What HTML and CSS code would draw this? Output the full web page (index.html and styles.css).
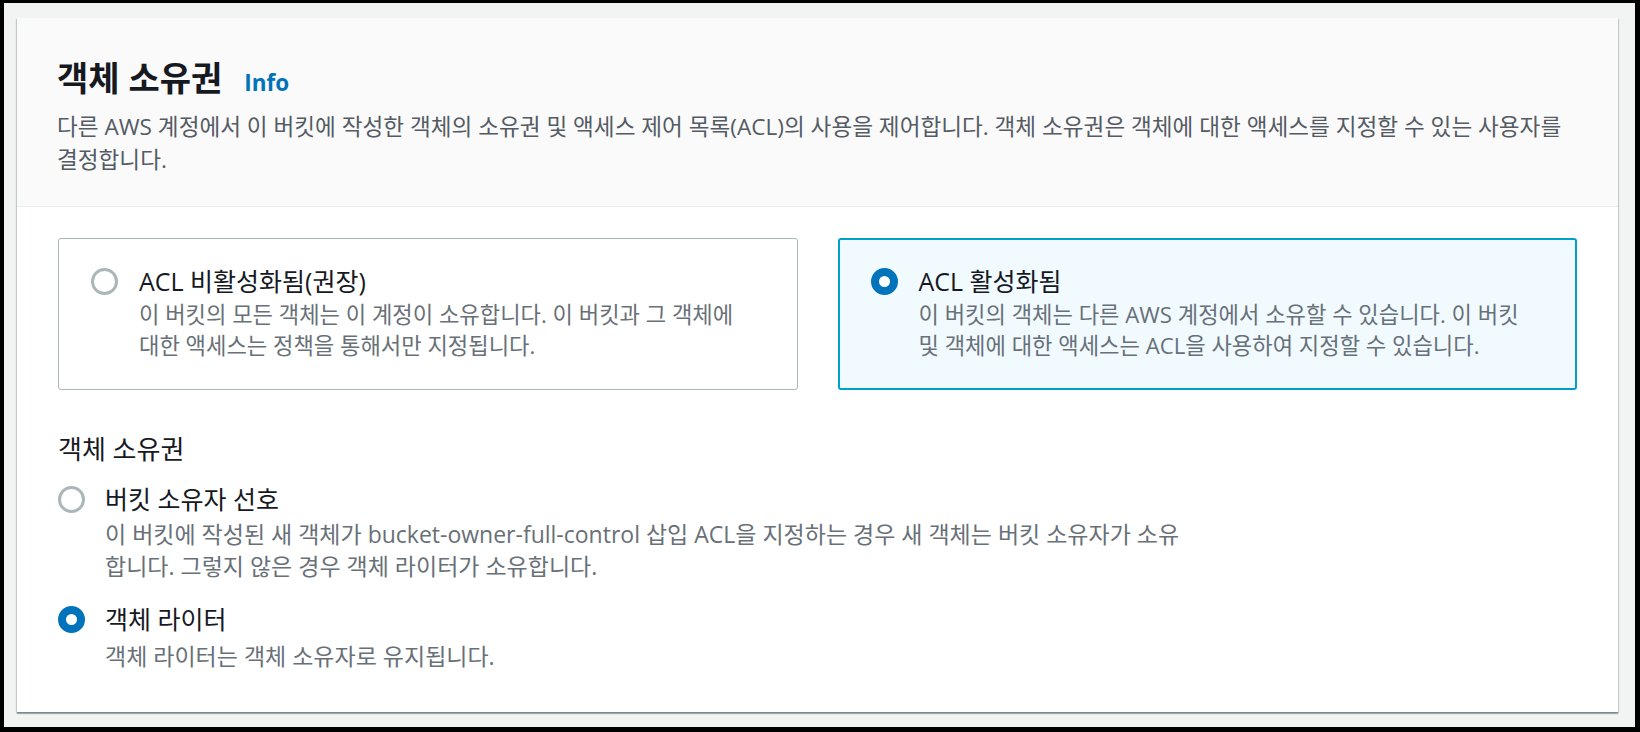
FILE: index.html
```html
<!DOCTYPE html>
<html lang="ko">

<head>
    <meta charset="UTF-8">
    <meta name="viewport" content="width=device-width, initial-scale=1.0">
    <title>객체 소유권</title>
    <link rel="stylesheet" href="styles.css">
</head>

<body>
    <div class="frame">
        <section class="container">
            <header class="container-header">
                <h2 class="title">객체 소유권<a class="info" href="#">Info</a></h2>
                <p class="desc">다른 AWS 계정에서 이 버킷에 작성한 객체의 소유권 및 액세스 제어 목록(ACL)의 사용을 제어합니다. 객체 소유권은 객체에 대한 액세스를 지정할 수 있는 사용자를 결정합니다.</p>
            </header>

            <div class="container-body">
                <!-- ACL tiles -->
                <div class="tiles">
                    <div class="tile">
                        <span class="radio"></span>
                        <div class="tile-text">
                            <div class="tile-title">ACL 비활성화됨(권장)</div>
                            <div class="tile-desc">이 버킷의 모든 객체는 이 계정이 소유합니다. 이 버킷과 그 객체에 대한 액세스는 정책을 통해서만 지정됩니다.</div>
                        </div>
                    </div>
                    <div class="tile selected">
                        <span class="radio checked"></span>
                        <div class="tile-text">
                            <div class="tile-title">ACL 활성화됨</div>
                            <div class="tile-desc">이 버킷의 객체는 다른 AWS 계정에서 소유할 수 있습니다. 이 버킷 및 객체에 대한 액세스는 ACL을 사용하여 지정할 수 있습니다.</div>
                        </div>
                    </div>
                </div>

                <div class="field-label">객체 소유권</div>

                <div class="radio-group">
                    <div class="radio-item">
                        <span class="radio"></span>
                        <div class="radio-text">
                            <div class="radio-title">버킷 소유자 선호</div>
                            <div class="radio-desc">이 버킷에 작성된 새 객체가 bucket-owner-full-control 삽입 ACL을 지정하는 경우 새 객체는 버킷 소유자가 소유합니다. 그렇지 않은 경우 객체 라이터가 소유합니다.</div>
                        </div>
                    </div>
                    <div class="radio-item">
                        <span class="radio checked"></span>
                        <div class="radio-text">
                            <div class="radio-title">객체 라이터</div>
                            <div class="radio-desc">객체 라이터는 객체 소유자로 유지됩니다.</div>
                        </div>
                    </div>
                </div>
            </div>
        </section>
    </div>
</body>

</html>
```

FILE: styles.css
```css
body {
    margin: 0;
    font-family: "Open Sans", "Noto Sans CJK KR", sans-serif;
    color: #16191f;
}

.frame {
    box-sizing: border-box;
    width: 1640px;
    height: 732px;
    border-style: solid;
    border-color: #000;
    border-width: 3px 5px 5px 4px;
    background-color: #f2f3f3;
    padding: 15px 17px 0 13px;
}

.container {
    background-color: #fff;
    box-shadow: 0 2px 1px 0 rgba(0, 28, 36, 0.3), 1px 1px 1px 0 rgba(0, 28, 36, 0.15), -1px 1px 1px 0 rgba(0, 28, 36, 0.15);
}

.container-header {
    background-color: #fafafa;
    border-bottom: 1px solid #eaeded;
    padding: 41px 40px 30px 40px;
}

.title {
    margin: 0;
    font-size: 34px;
    line-height: 38px;
    font-weight: 700;
}

.info {
    margin-left: 22px;
    font-size: 22.5px;
    font-weight: 700;
    color: #0073bb;
    text-decoration: none;
}

.desc {
    margin: 8px 0 0 0;
    font-size: 22.6px;
    line-height: 33px;
    color: #545b64;
    word-break: keep-all;
}

.container-body {
    padding: 31px 41px 40px 41px;
}

.tiles {
    display: grid;
    grid-template-columns: 1fr 1fr;
    gap: 40px;
}

.tile {
    display: flex;
    gap: 21px;
    border: 1px solid #aab7b8;
    border-radius: 3px;
    padding: 26px 32px 28px 32px;
}

.tile.selected {
    border: 2px solid #00a1c9;
    background-color: #f1faff;
    padding: 25px 31px 27px 31px;
}

.radio {
    flex: none;
    box-sizing: border-box;
    width: 27px;
    height: 27px;
    margin-top: 3px;
    border: 3px solid #aab7b8;
    border-radius: 50%;
    background-color: #fff;
}

.radio.checked {
    border: 8px solid #0073bb;
}

.tile-title {
    font-size: 25px;
    line-height: 32px;
}

.tile-desc {
    margin-top: 2px;
    font-size: 22.2px;
    line-height: 31px;
    color: #687078;
    word-break: keep-all;
}

.field-label {
    margin-top: 43px;
    font-size: 26px;
    line-height: 32px;
}

.radio-group {
    margin-top: 18px;
}

.radio-item {
    display: flex;
    gap: 20px;
}

.radio-item + .radio-item {
    margin-top: 21px;
}

.radio-text {
    max-width: 1085px;
}

.radio-title {
    font-size: 25px;
    line-height: 32px;
}

.radio-desc {
    margin-top: 3px;
    font-size: 23px;
    line-height: 32px;
    color: #687078;
}

.radio-item + .radio-item .radio-desc {
    margin-top: 5px;
}
```
